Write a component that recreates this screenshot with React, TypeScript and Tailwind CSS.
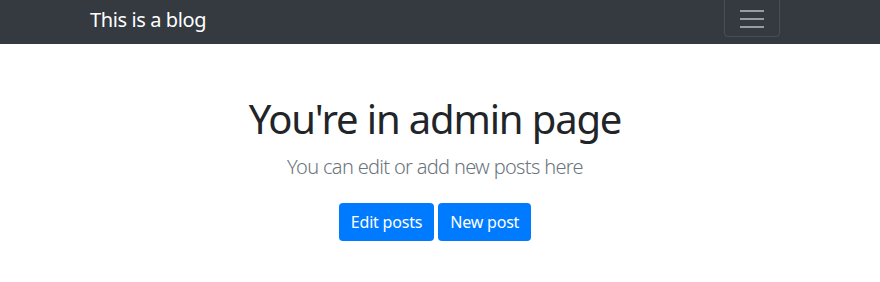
export default function App() {
  return (
    <div className="min-h-[282px] bg-white font-['Noto_Sans',sans-serif] text-[#212529]">
      <nav className="h-[44px] bg-[#343a40] overflow-hidden">
        <div className="flex h-full items-start justify-between pl-[90px] pr-[100px]">
          <a href="#" className="mt-[5px] text-[20px] leading-[30px] tracking-[-0.4px] text-white">
            This is a blog
          </a>
          <button className="-mt-[4px] flex h-[41px] w-[56px] flex-col items-center justify-center gap-[6px] rounded-[4px] border border-white/10 pt-[4px]">
            <span className="h-[2px] w-[24px] bg-white/50" />
            <span className="h-[2px] w-[24px] bg-white/50" />
            <span className="h-[2px] w-[24px] bg-white/50" />
          </button>
        </div>
      </nav>
      <main className="flex flex-col items-center pt-[51px] pr-[10px] text-center">
        <h1 className="text-[40px] leading-[48px] font-normal tracking-[-1.15px]">You're in admin page</h1>
        <p className="mt-[9px] text-[20px] leading-[30px] font-light tracking-[-0.68px] text-[#6c757d]">
          You can edit or add new posts here
        </p>
        <div className="mt-[21px] flex gap-[4px]">
          <button className="h-[38px] rounded-[4px] bg-[#007bff] px-[12px] text-[16px] tracking-[-0.2px] text-white">
            Edit posts
          </button>
          <button className="h-[38px] rounded-[4px] bg-[#007bff] px-[12px] text-[16px] tracking-[-0.2px] text-white">
            New post
          </button>
        </div>
      </main>
    </div>
  );
}
